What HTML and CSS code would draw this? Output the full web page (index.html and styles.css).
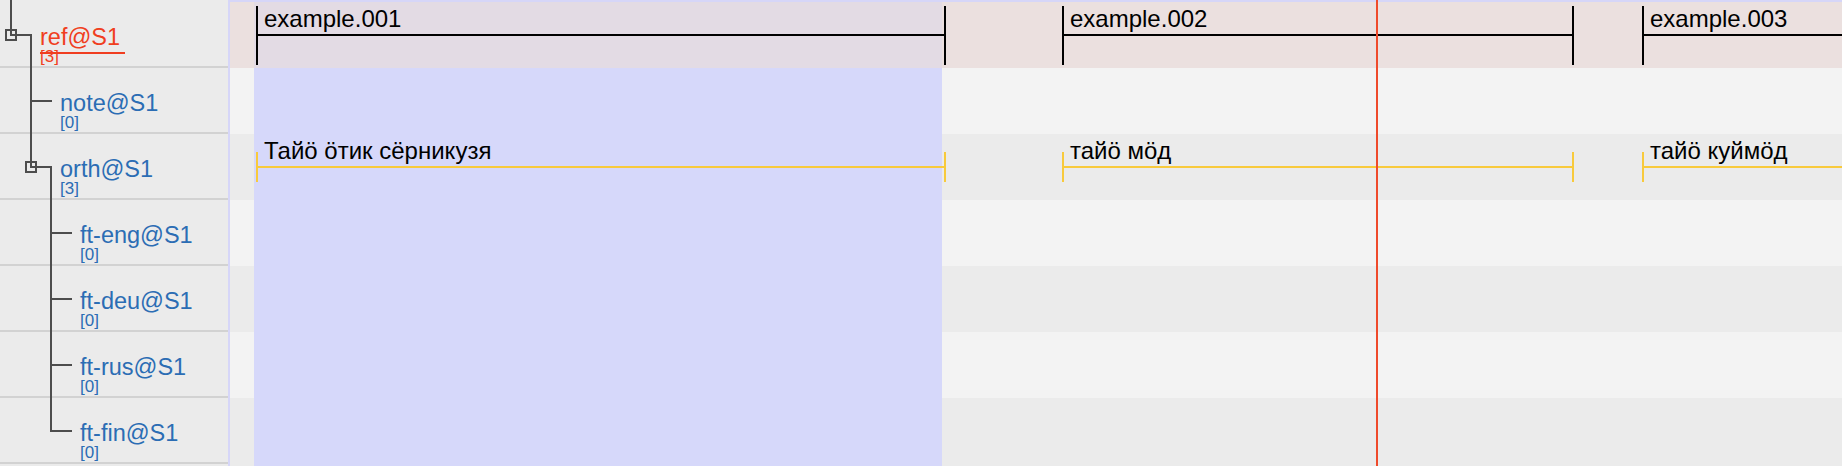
FILE: index.html
```html
<!DOCTYPE html>
<html>
<head>
<meta charset="utf-8">
<link rel="stylesheet" href="styles.css">
</head>
<body>
<div class="app">
  <div class="tree">
    <svg class="tree-lines" width="228" height="466" viewBox="0 0 228 466">
      <g stroke="#4d4d4d" stroke-width="2" fill="none">
        <path d="M11 0 V35 H31 V167 H51 V431 H72"/>
        <rect x="6" y="30" width="10" height="10"/>
        <path d="M31 101 H52"/>
        <rect x="26" y="162" width="10" height="10"/>
        <path d="M51 233 H72 M51 299 H72 M51 365 H72"/>
      </g>
    </svg>
    <div class="tier-label lvl0 active"><span class="name">ref@S1</span><span class="count">[3]</span></div>
    <div class="tier-label lvl1"><span class="name">note@S1</span><span class="count">[0]</span></div>
    <div class="tier-label lvl1"><span class="name">orth@S1</span><span class="count">[3]</span></div>
    <div class="tier-label lvl2"><span class="name">ft-eng@S1</span><span class="count">[0]</span></div>
    <div class="tier-label lvl2"><span class="name">ft-deu@S1</span><span class="count">[0]</span></div>
    <div class="tier-label lvl2"><span class="name">ft-rus@S1</span><span class="count">[0]</span></div>
    <div class="tier-label lvl2"><span class="name">ft-fin@S1</span><span class="count">[0]</span></div>
  </div>
  <div class="timeline">
    <div class="selection"></div>
    <div class="cursor"></div>
    <div class="row row-ref">
      <div class="row-selection"></div>
      <div class="seg seg-ref" style="left:26px;width:690px"><span class="seg-text">example.001</span></div>
      <div class="seg seg-ref" style="left:832px;width:512px"><span class="seg-text">example.002</span></div>
      <div class="seg seg-ref" style="left:1412px;width:500px"><span class="seg-text">example.003</span></div>
    </div>
    <div class="row row-light"></div>
    <div class="row row-dark">
      <div class="seg seg-orth" style="left:26px;width:690px"><span class="seg-text">Тайӧ ӧтик сёрникузя</span></div>
      <div class="seg seg-orth" style="left:832px;width:512px"><span class="seg-text">тайӧ мӧд</span></div>
      <div class="seg seg-orth" style="left:1412px;width:500px"><span class="seg-text">тайӧ куймӧд</span></div>
    </div>
    <div class="row row-light"></div>
    <div class="row row-dark"></div>
    <div class="row row-light"></div>
    <div class="row row-dark"></div>
  </div>
</div>
</body>
</html>
```

FILE: styles.css
```css
html, body {
  margin: 0;
  padding: 0;
  background: #ebebeb;
  font-family: "Liberation Sans", Arial, sans-serif;
  overflow: hidden;
}

.app {
  display: flex;
  width: 1842px;
  height: 466px;
  overflow: hidden;
}

.tree {
  position: relative;
  flex: 0 0 228px;
  width: 228px;
  height: 464px;
  padding-top: 2px;
  background: #ebebeb;
  border-right: 2px solid #d6d6f8;
}

.tree-lines {
  position: absolute;
  left: 0;
  top: 0;
}

.tier-label {
  box-sizing: border-box;
  height: 66px;
  padding-top: 24px;
  border-bottom: 2px solid #d2d2d2;
  color: #2b6db4;
}

.tier-label.lvl0 { padding-left: 40px; }
.tier-label.lvl1 { padding-left: 60px; }
.tier-label.lvl2 { padding-left: 80px; }

.name {
  display: block;
  width: fit-content;
  font-size: 23.5px;
  line-height: 23px;
  white-space: nowrap;
}

.count {
  display: block;
  font-size: 17px;
  line-height: 16px;
}

.tier-label.active { color: #f03e20; }

.tier-label.active .name {
  padding-right: 5px;
  padding-bottom: 3px;
  border-bottom: 2px solid #f03e20;
  margin-bottom: -5px;
}

.timeline {
  position: relative;
  flex: 1 1 auto;
  height: 464px;
  padding-top: 2px;
  background: linear-gradient(#d6d6f8 0, #d6d6f8 2px, #ebebeb 2px);
  overflow: hidden;
}

.row {
  position: relative;
  height: 66px;
}

.row-ref { background: #ebe0df; }
.row-light { background: #f3f3f3; }
.row-dark { background: #ebebeb; }

.selection {
  position: absolute;
  z-index: 1;
  left: 24px;
  width: 688px;
  top: 68px;
  bottom: 0;
  background: #d6d8fa;
}

.row-selection {
  position: absolute;
  z-index: 1;
  left: 24px;
  width: 688px;
  top: 0;
  bottom: 0;
  background: #e3dbe4;
}

.cursor {
  position: absolute;
  z-index: 3;
  left: 1146px;
  width: 2px;
  top: 0;
  bottom: 0;
  background: #ef4a2b;
}

.seg {
  position: absolute;
  z-index: 2;
  top: 0;
  height: 66px;
}

.seg::before {
  content: "";
  position: absolute;
  left: 0;
  right: 0;
  box-sizing: border-box;
  border-left: 2px solid #000;
  border-right: 2px solid #000;
}

.seg::after {
  content: "";
  position: absolute;
  left: 0;
  right: 0;
  top: 32px;
  height: 2px;
  background: #000;
}

.seg-ref::before { top: 4px; height: 59px; }

.seg-orth::before {
  top: 18px;
  height: 30px;
  border-color: #f8ca3c;
}

.seg-orth::after { background: #f8ca3c; }

.seg-text {
  display: block;
  padding: 5px 0 0 8px;
  font-size: 24px;
  line-height: 24px;
  color: #000;
  white-space: nowrap;
}
```
